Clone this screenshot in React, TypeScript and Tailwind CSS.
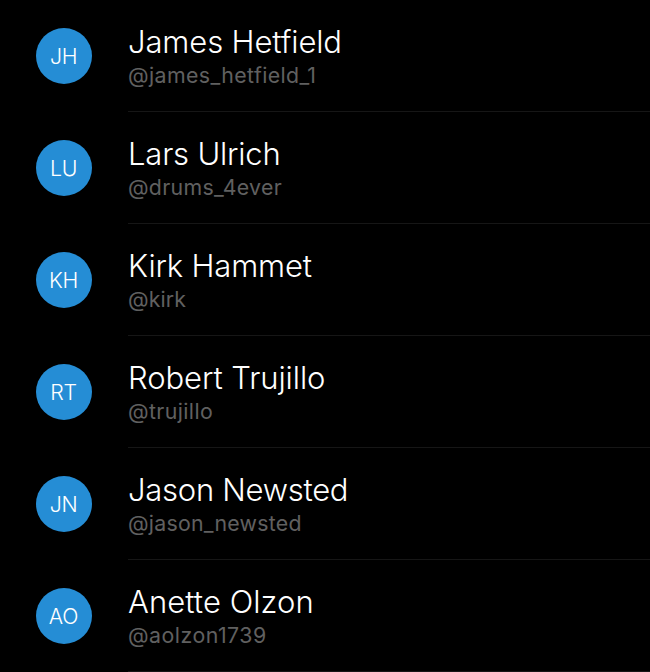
const people = [
  { initials: "JH", name: "James Hetfield", handle: "@james_hetfield_1", nameTracking: "tracking-[-0.12px]", handleTracking: "tracking-[0.4px]" },
  { initials: "LU", name: "Lars Ulrich", handle: "@drums_4ever", nameTracking: "tracking-[-0.2px]", handleTracking: "tracking-[0.3px]" },
  { initials: "KH", name: "Kirk Hammet", handle: "@kirk", nameTracking: "tracking-[-0.16px]", handleTracking: "tracking-[0.15px]" },
  { initials: "RT", name: "Robert Trujillo", handle: "@trujillo", nameTracking: "tracking-[-0.08px]", handleTracking: "tracking-[0.4px]" },
  { initials: "JN", name: "Jason Newsted", handle: "@jason_newsted", nameTracking: "tracking-[-0.27px]", handleTracking: "tracking-[0.25px]" },
  { initials: "AO", name: "Anette Olzon", handle: "@aolzon1739", nameTracking: "tracking-[0.06px]", handleTracking: "tracking-[0.5px]" },
];

export default function App() {
  return (
    <ul className="h-[672px] w-[650px] overflow-hidden bg-black font-['Inter',sans-serif] [font-variant-ligatures:none]">
      {people.map((p) => (
        <li key={p.handle} className="flex h-28 items-center gap-9 pl-9">
          <div className="flex size-14 shrink-0 items-center justify-center rounded-full bg-[#258dd5] pt-0.5 pr-px text-[21.3px] font-light tracking-[-0.3px] text-white">
            {p.initials}
          </div>
          <div className="flex h-full flex-1 flex-col border-b border-[#161616] pt-[23px] whitespace-nowrap">
            <div className={`text-[31px] leading-[37px] font-light text-white ${p.nameTracking}`}>{p.name}</div>
            <div className={`mt-px text-[21.3px] leading-7 text-[#606060] ${p.handleTracking}`}>{p.handle}</div>
          </div>
        </li>
      ))}
    </ul>
  );
}
